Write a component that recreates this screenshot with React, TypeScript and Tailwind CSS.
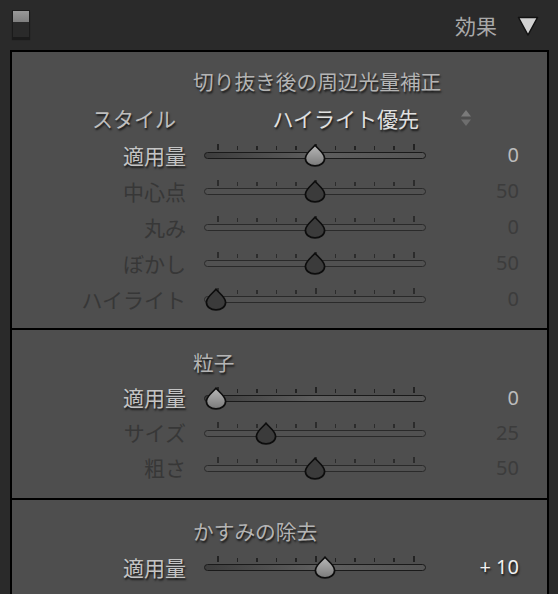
import React from "react";

const jp = { fontFamily: '"Noto Sans CJK JP", "Noto Sans", sans-serif' };
const num = { fontFamily: '"Noto Sans", "DejaVu Sans", sans-serif' };

const shadowDark = "[text-shadow:1px_2px_2px_rgba(0,0,0,0.7)]";

interface SliderRowProps {
  label: string;
  pos: number; // 0..1
  value: string;
  active?: boolean;
  changed?: boolean;
  h?: string;
}

const Thumb: React.FC<{ active: boolean }> = ({ active }) => (
  <svg width="22" height="23" viewBox="0 0 22 23">
    <defs>
      <linearGradient id="thumbA" x1="0" y1="0" x2="0" y2="1">
        <stop offset="0" stopColor="#b8b8b8" />
        <stop offset="1" stopColor="#7a7a7a" />
      </linearGradient>
    </defs>
    <path
      d="M11 1.2 C13.5 4.5 20.6 9.2 20.6 14.2 C20.6 18.8 16.4 21.8 11 21.8 C5.6 21.8 1.4 18.8 1.4 14.2 C1.4 9.2 8.5 4.5 11 1.2 Z"
      fill={active ? "url(#thumbA)" : "#3b3b3b"}
      stroke="#0d0d0d"
      strokeWidth="1.7"
    />
  </svg>
);

const Slider: React.FC<{ pos: number; active: boolean }> = ({ pos, active }) => {
  const ticks = Array.from({ length: 11 }, (_, i) => i);
  return (
    <div className="relative w-[222px] h-[36px] ml-[18px]">
      {ticks.map((i) => {
        const tall = i === 0 || i === 5 || i === 10;
        return (
          <div
            key={i}
            className={`absolute w-[1.5px] ${tall ? "top-[7px] h-[6px]" : "top-[9px] h-[4px]"} ${
              active ? "bg-[#232323]" : "bg-[#2c2c2c]"
            }`}
            style={{ left: 13 + i * 19.6 }}
          />
        );
      })}
      <div
        className={`absolute left-0 right-0 top-[15px] h-[7px] rounded-full border-[1.5px] ${
          active
            ? "border-[#1a1a1a] bg-gradient-to-r from-[#3d3d3d] via-[#5e5e5e] to-[#555555]"
            : "border-[#2a2a2a] bg-[#515151]"
        }`}
      />
      <div className="absolute top-[7px]" style={{ left: 1 + pos * 198 }}>
        <Thumb active={active} />
      </div>
    </div>
  );
};

const SliderRow: React.FC<SliderRowProps> = ({ label, pos, value, active = false, changed = false, h = "h-[36px]" }) => (
  <div className={`flex items-center ${h}`}>
    <div
      className={`w-[174px] text-right text-[21px] leading-none ${
        active ? `text-[#c4c4c4] ${shadowDark}` : "text-[#373737]"
      }`}
      style={jp}
    >
      {label}
    </div>
    <Slider pos={pos} active={active} />
    <div
      className={`w-[93px] text-right text-[20px] leading-none ${
        changed ? `text-[#f2f2f2] ${shadowDark}` : active ? "text-[#bcbcbc]" : "text-[#3c3c3c]"
      }`}
      style={num}
    >
      {value}
    </div>
  </div>
);

const SectionTitle: React.FC<{ children: React.ReactNode }> = ({ children }) => (
  <div className="h-[36px] flex items-center pl-[181px]">
    <span className={`text-[20.7px] leading-none text-[#b4b4b4] ${shadowDark}`} style={jp}>
      {children}
    </span>
  </div>
);

export default function App() {
  return (
    <div className="w-[558px] h-[594px] overflow-hidden bg-[#2a2a2a]">
      {/* Header */}
      <div className="h-[50px] flex items-start justify-between">
        <div className="ml-[12px] mt-[10px] w-[18px] h-[28px] border border-[#1b1b1b] bg-[#2a2a2a] flex flex-col shadow-[0_2px_1px_rgba(0,0,0,0.35)]">
          <div className="h-[11px] bg-gradient-to-b from-[#999999] to-[#7f7f7f]" />
        </div>
        <div className="flex items-center mt-[13px] mr-[19px]">
          <span className="text-[21px] leading-none text-[#a9a9a9]" style={jp}>
            効果
          </span>
          <svg width="22" height="22" viewBox="0 0 22 22" className="ml-[20px] mt-[2px]">
            <polygon points="1.5,2.5 20.5,2.5 11,20" fill="#d2d2d2" stroke="#111" strokeWidth="1.5" strokeLinejoin="round" />
          </svg>
        </div>
      </div>

      {/* Panel */}
      <div className="ml-[10px] mr-[9px] border-2 border-black bg-[#4e4e4e]">
        {/* Vignette */}
        <div className="pt-[11px] pb-[11px]">
          <SectionTitle>切り抜き後の周辺光量補正</SectionTitle>
          <div className="h-[38px] flex items-center">
            <div className={`w-[164px] text-right text-[21px] leading-none text-[#bebebe] ${shadowDark}`} style={jp}>
              スタイル
            </div>
            <div className={`w-[243px] text-right text-[21px] leading-none text-[#e0e0e0] ${shadowDark}`} style={jp}>
              ハイライト優先
            </div>
            <svg width="12" height="18" viewBox="0 0 12 18" className="ml-[41px]">
              <polygon points="6,1 11,7.5 1,7.5" fill="#7a7a7a" />
              <polygon points="1,10.5 11,10.5 6,17" fill="#6e6e6e" />
            </svg>
          </div>
          <SliderRow label="適用量" pos={0.5} value="0" active />
          <SliderRow label="中心点" pos={0.5} value="50" />
          <SliderRow label="丸み" pos={0.5} value="0" />
          <SliderRow label="ぼかし" pos={0.5} value="50" />
          <SliderRow label="ハイライト" pos={0} value="0" />
        </div>

        {/* Grain */}
        <div className="border-t-2 border-black pt-[14px] pb-[13px]">
          <SectionTitle>粒子</SectionTitle>
          <SliderRow label="適用量" pos={0} value="0" active h="h-[35px]" />
          <SliderRow label="サイズ" pos={0.25} value="25" h="h-[35px]" />
          <SliderRow label="粗さ" pos={0.5} value="50" h="h-[35px]" />
        </div>

        {/* Dehaze */}
        <div className="border-t-2 border-black pt-[13px] pb-[20px]">
          <SectionTitle>かすみの除去</SectionTitle>
          <SliderRow label="適用量" pos={0.55} value="+ 10" active changed />
        </div>
      </div>
    </div>
  );
}
